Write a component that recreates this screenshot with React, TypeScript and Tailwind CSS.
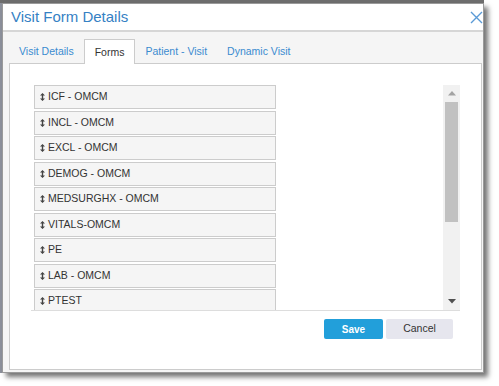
import React from "react";

const forms = [
  "ICF - OMCM",
  "INCL - OMCM",
  "EXCL - OMCM",
  "DEMOG - OMCM",
  "MEDSURGHX - OMCM",
  "VITALS-OMCM",
  "PE",
  "LAB - OMCM",
  "PTEST",
];

const tabs = ["Visit Details", "Forms", "Patient - Visit", "Dynamic Visit"];

function SortGlyph() {
  return (
    <svg width="5" height="8" viewBox="0 0 5 8" className="shrink-0">
      <path d="M2.5 0 L5 2.6 H0 Z M2.5 8 L5 5.4 H0 Z" fill="#444" />
      <rect x="1.8" y="2" width="1.4" height="4" fill="#444" />
    </svg>
  );
}

function FormRow({ label }: { label: string }) {
  return (
    <div className="h-[24px] w-[242px] shrink-0 bg-[#f5f5f5] border border-[#cccccc] flex items-center gap-[3px] pl-[5px] text-[10.5px] text-[#333]">
      <SortGlyph />
      <span>{label}</span>
    </div>
  );
}

export default function App() {
  return (
    <div className="w-[499px] h-[386px] bg-white overflow-hidden font-['Liberation_Sans',Arial,sans-serif]">
      {/* backdrop edge */}
      <div className="h-[3px] w-[484px] bg-[#6e6e6e]" />
      <div className="flex">
        <div className="w-[2px] h-[370px] bg-[#8d919c]" />

        {/* Dialog */}
        <div className="w-[482px] h-[370px] bg-white border border-[#9a9a9a] shadow-[4px_4px_5px_rgba(0,0,0,0.55)] flex flex-col">
          <div className="h-[26px] flex items-center justify-between pl-[8px] pr-[0px] border-b-2 border-[#d6d6d6] box-content">
            <span className="text-[15px] text-[#3581c4]">Visit Form Details</span>
            <svg width="13" height="13" viewBox="0 0 13 13" className="mt-[1px]">
              <path d="M1 1 L12 12 M12 1 L1 12" stroke="#5a9ad6" strokeWidth="1.4" />
            </svg>
          </div>

          <div className="flex-1 bg-[#f5f5f5] pl-[7px] pr-[1px] pt-[7px] pb-[2px] flex flex-col">
            {/* Tabs */}
            <div className="flex h-[25px] -mb-[1px] relative z-10 -ml-[1px]">
              {tabs.map((t) =>
                t === "Forms" ? (
                  <div
                    key={t}
                    className="px-[10px] bg-white border border-b-0 border-[#cccccc] flex items-center text-[10.5px] text-[#333] pt-[1px]"
                  >
                    {t}
                  </div>
                ) : (
                  <div key={t} className="px-[10px] flex items-center text-[10.5px] text-[#3a8bd0] pt-[1px]">
                    {t}
                  </div>
                )
              )}
            </div>

            {/* Panel */}
            <div className="flex-1 -ml-[1px] bg-white border border-[#cccccc] pt-[21px] px-[21px] flex flex-col">
              <div className="h-[226px] flex border-b border-[#dddddd]">
                <div className="flex-1 overflow-hidden pl-[3px] flex flex-col gap-[1.5px]">
                  {forms.map((f) => (
                    <FormRow key={f} label={f} />
                  ))}
                </div>
                {/* scrollbar */}
                <div className="w-[17px] bg-[#f1f1f1] flex flex-col items-center">
                  <div className="h-[17px] flex items-center justify-center">
                    <svg width="8" height="5" viewBox="0 0 8 5">
                      <path d="M4 0 L8 4.5 H0 Z" fill="#a3a3a3" />
                    </svg>
                  </div>
                  <div className="w-[13px] h-[120px] bg-[#c1c1c1]" />
                  <div className="flex-1" />
                  <div className="h-[17px] flex items-center justify-center">
                    <svg width="8" height="5" viewBox="0 0 8 5">
                      <path d="M0 0 H8 L4 4.5 Z" fill="#505050" />
                    </svg>
                  </div>
                </div>
              </div>

              <div className="flex justify-end gap-[3px] pr-[7px] mt-[8px]">
                <button className="w-[59px] h-[20px] rounded-[2px] bg-[#229fda] text-white text-[10px] font-bold">
                  Save
                </button>
                <button className="w-[67px] h-[20px] rounded-[2px] bg-[#e6e6ee] text-[#333] text-[10.5px]">
                  Cancel
                </button>
              </div>
            </div>
          </div>
        </div>
      </div>
    </div>
  );
}
